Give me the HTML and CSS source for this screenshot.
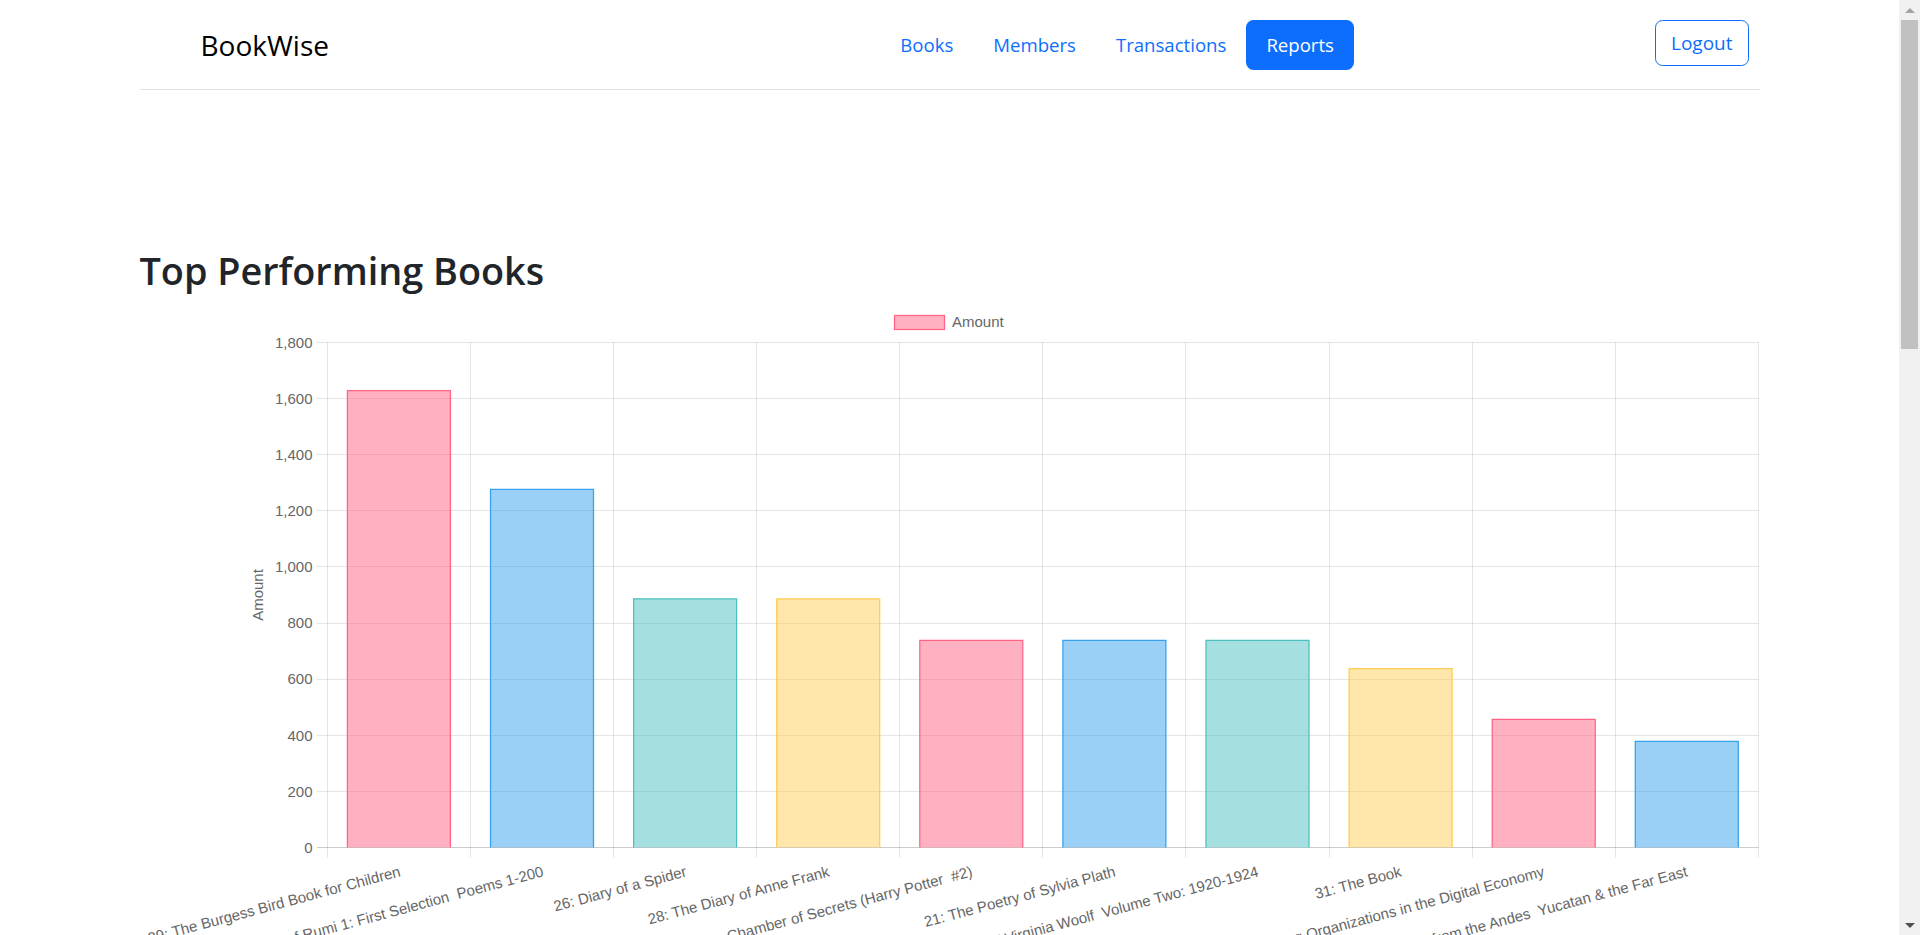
FILE: index.html
```html
<!DOCTYPE html>
<html lang="en">
<head>
<meta charset="utf-8">
<title>BookWise - Reports</title>
<link rel="stylesheet" href="styles.css">
</head>
<body>
<div class="container">
  <nav class="navbar">
    <a class="brand" href="#">BookWise</a>
    <ul class="nav">
      <li><a class="nav-link" href="#">Books</a></li>
      <li><a class="nav-link" href="#">Members</a></li>
      <li><a class="nav-link" href="#">Transactions</a></li>
      <li><a class="nav-link active" href="#">Reports</a></li>
    </ul>
    <button class="btn-logout" type="button">Logout</button>
  </nav>
  <main class="main">
    <h2 class="title">Top Performing Books</h2>
    <div class="chart">
      <svg class="chart-svg" width="1620" height="700" viewBox="140 305 1620 700" xmlns="http://www.w3.org/2000/svg">
        <!-- legend -->
        <rect x="894.5" y="315.5" width="50" height="14" fill="rgba(255,99,132,0.5)" stroke="rgb(255,99,132)" stroke-width="1.25"/>
        <text class="lbl" x="952" y="327">Amount</text>

        <!-- horizontal grid -->
        <g stroke="rgba(0,0,0,0.1)" stroke-width="1">
          <line x1="317" y1="342.5" x2="1758.5" y2="342.5"/>
          <line x1="317" y1="398.5" x2="1758.5" y2="398.5"/>
          <line x1="317" y1="454.5" x2="1758.5" y2="454.5"/>
          <line x1="317" y1="510.5" x2="1758.5" y2="510.5"/>
          <line x1="317" y1="566.5" x2="1758.5" y2="566.5"/>
          <line x1="317" y1="623.5" x2="1758.5" y2="623.5"/>
          <line x1="317" y1="679.5" x2="1758.5" y2="679.5"/>
          <line x1="317" y1="735.5" x2="1758.5" y2="735.5"/>
          <line x1="317" y1="791.5" x2="1758.5" y2="791.5"/>
        </g>
        <!-- vertical grid -->
        <g stroke="rgba(0,0,0,0.1)" stroke-width="1">
          <line x1="327.5" y1="342" x2="327.5" y2="857.5"/>
          <line x1="470.5" y1="342" x2="470.5" y2="857.5"/>
          <line x1="613.5" y1="342" x2="613.5" y2="857.5"/>
          <line x1="756.5" y1="342" x2="756.5" y2="857.5"/>
          <line x1="899.5" y1="342" x2="899.5" y2="857.5"/>
          <line x1="1042.5" y1="342" x2="1042.5" y2="857.5"/>
          <line x1="1185.5" y1="342" x2="1185.5" y2="857.5"/>
          <line x1="1329.5" y1="342" x2="1329.5" y2="857.5"/>
          <line x1="1472.5" y1="342" x2="1472.5" y2="857.5"/>
          <line x1="1615.5" y1="342" x2="1615.5" y2="857.5"/>
          <line x1="1758.5" y1="342" x2="1758.5" y2="857.5"/>
        </g>
        <line x1="317" y1="847.5" x2="1758.5" y2="847.5" stroke="rgba(0,0,0,0.2)" stroke-width="1"/>

        <!-- y ticks -->
        <g class="lbl" text-anchor="end">
          <text x="312.5" y="347.7">1,800</text>
          <text x="312.5" y="403.8">1,600</text>
          <text x="312.5" y="459.9">1,400</text>
          <text x="312.5" y="516">1,200</text>
          <text x="312.5" y="572.1">1,000</text>
          <text x="312.5" y="628.3">800</text>
          <text x="312.5" y="684.4">600</text>
          <text x="312.5" y="740.5">400</text>
          <text x="312.5" y="796.6">200</text>
          <text x="312.5" y="852.7">0</text>
        </g>
        <text class="lbl" text-anchor="middle" dy="5.2" transform="translate(257.5 595) rotate(-90)">Amount</text>

        <!-- bars -->
        <g stroke-width="1.25">
          <rect x="347.4" y="390.7" width="103" height="456.8" fill="rgba(255,99,132,0.5)"/>
          <path d="M347.4 847.5V390.7H450.4V847.5" fill="none" stroke="rgb(255,99,132)"/>
          <rect x="490.5" y="489.3" width="103" height="358.2" fill="rgba(54,162,235,0.5)"/>
          <path d="M490.5 847.5V489.3H593.5V847.5" fill="none" stroke="rgb(54,162,235)"/>
          <rect x="633.6" y="598.8" width="103" height="248.7" fill="rgba(75,192,192,0.5)"/>
          <path d="M633.6 847.5V598.8H736.6V847.5" fill="none" stroke="rgb(75,192,192)"/>
          <rect x="776.7" y="598.8" width="103" height="248.7" fill="rgba(255,205,86,0.5)"/>
          <path d="M776.7 847.5V598.8H879.7V847.5" fill="none" stroke="rgb(255,205,86)"/>
          <rect x="919.8" y="640.4" width="103" height="207.1" fill="rgba(255,99,132,0.5)"/>
          <path d="M919.8 847.5V640.4H1022.8V847.5" fill="none" stroke="rgb(255,99,132)"/>
          <rect x="1062.9" y="640.4" width="103" height="207.1" fill="rgba(54,162,235,0.5)"/>
          <path d="M1062.9 847.5V640.4H1165.9V847.5" fill="none" stroke="rgb(54,162,235)"/>
          <rect x="1206" y="640.4" width="103" height="207.1" fill="rgba(75,192,192,0.5)"/>
          <path d="M1206 847.5V640.4H1309V847.5" fill="none" stroke="rgb(75,192,192)"/>
          <rect x="1349.1" y="668.6" width="103" height="178.9" fill="rgba(255,205,86,0.5)"/>
          <path d="M1349.1 847.5V668.6H1452.1V847.5" fill="none" stroke="rgb(255,205,86)"/>
          <rect x="1492.2" y="719.3" width="103" height="128.2" fill="rgba(255,99,132,0.5)"/>
          <path d="M1492.2 847.5V719.3H1595.2V847.5" fill="none" stroke="rgb(255,99,132)"/>
          <rect x="1635.3" y="741.3" width="103" height="106.2" fill="rgba(54,162,235,0.5)"/>
          <path d="M1635.3 847.5V741.3H1738.3V847.5" fill="none" stroke="rgb(54,162,235)"/>
        </g>

        <!-- x labels -->
        <g class="lbl" text-anchor="end">
          <text dy="5.2" transform="translate(400 871) rotate(-15)">29: The Burgess Bird Book for Children</text>
          <text dy="5.2" transform="translate(543 871) rotate(-15)">24: The Quatrains of Rumi 1: First Selection &#160;Poems 1-200</text>
          <text dy="5.2" transform="translate(686 871) rotate(-15)">26: Diary of a Spider</text>
          <text dy="5.2" transform="translate(829 871) rotate(-15)">28: The Diary of Anne Frank</text>
          <text dy="5.2" transform="translate(972 871) rotate(-15)">23: Harry Potter and the Chamber of Secrets (Harry Potter &#160;#2)</text>
          <text dy="5.2" transform="translate(1115 871) rotate(-15)">21: The Poetry of Sylvia Plath</text>
          <text dy="5.2" transform="translate(1258 871) rotate(-15)">27: The Diary of Virginia Woolf &#160;Volume Two: 1920-1924</text>
          <text dy="5.2" transform="translate(1401 871) rotate(-15)">31: The Book</text>
          <text dy="5.2" transform="translate(1544 871) rotate(-15)">30: Managing Organizations in the Digital Economy</text>
          <text dy="5.2" transform="translate(1687 871) rotate(-15)">25: Incidents of Travel from the Andes &#160;Yucatan &amp; the Far East</text>
        </g>
      </svg>
    </div>
  </main>
</div>

<div class="scrollbar" aria-hidden="true">
  <div class="sb-btn"><span class="sb-up"></span></div>
  <div class="sb-thumb"></div>
  <div class="sb-track"></div>
  <div class="sb-btn"><span class="sb-down"></span></div>
</div>
</body>
</html>
```

FILE: styles.css
```css
html, body {
  margin: 0;
  padding: 0;
  background: #fff;
}

body {
  font-family: "Open Sans", "Noto Sans", sans-serif;
  color: #212529;
  padding-right: 21px;
}

/* simulated classic scrollbar (browser chrome in the reference) */
.scrollbar {
  position: fixed;
  top: 0;
  right: 0;
  width: 21px;
  height: 100vh;
  background: #f1f1f1;
  display: flex;
  flex-direction: column;
  z-index: 10;
}

.sb-btn {
  height: 20px;
  flex: none;
  display: flex;
  align-items: center;
  justify-content: center;
}

.sb-up {
  width: 0;
  height: 0;
  border-left: 5px solid transparent;
  border-right: 5px solid transparent;
  border-bottom: 5px solid #a3a3a3;
}

.sb-down {
  width: 0;
  height: 0;
  border-left: 5px solid transparent;
  border-right: 5px solid transparent;
  border-top: 5px solid #505050;
}

.sb-thumb {
  height: 329px;
  flex: none;
  margin: 0 2px;
  background: #c1c1c1;
}

.sb-track {
  flex: 1;
}

.container {
  width: 1620px;
  margin: 0 auto;
}

.navbar {
  display: flex;
  align-items: center;
  height: 89px;
  border-bottom: 1px solid #dee2e6;
}

.brand {
  padding-left: 61px;
  font-size: 28px;
  color: #000;
  text-decoration: none;
  line-height: 1.5;
}

.nav {
  display: flex;
  list-style: none;
  margin: 0 0 0 auto;
  padding: 0;
}

.nav-link {
  display: block;
  padding: 10px 20px;
  font-size: 18.6px;
  line-height: 30px;
  color: #0d6efd;
  text-decoration: none;
  border-radius: 7.5px;
}

.nav-link.active {
  background: #0d6efd;
  color: #fff;
}

.btn-logout {
  margin-left: 301px;
  margin-right: 11px;
  height: 46px;
  padding: 0 15px;
  font-family: inherit;
  font-size: 19px;
  color: #0d6efd;
  background: #fff;
  border: 1.25px solid #0d6efd;
  border-radius: 7.5px;
  margin-top: -3px;
}

.main {
  min-height: 2453px;
}

.title {
  margin: 157px 0 10px 0;
  font-size: 37.8px;
  font-weight: 600;
  line-height: 48px;
  color: #212529;
}

.chart {
  height: 700px;
}

.chart-svg {
  display: block;
  overflow: hidden;
}

.lbl {
  font-family: "Liberation Sans", Arial, sans-serif;
  font-size: 15px;
  fill: #666;
}
```
